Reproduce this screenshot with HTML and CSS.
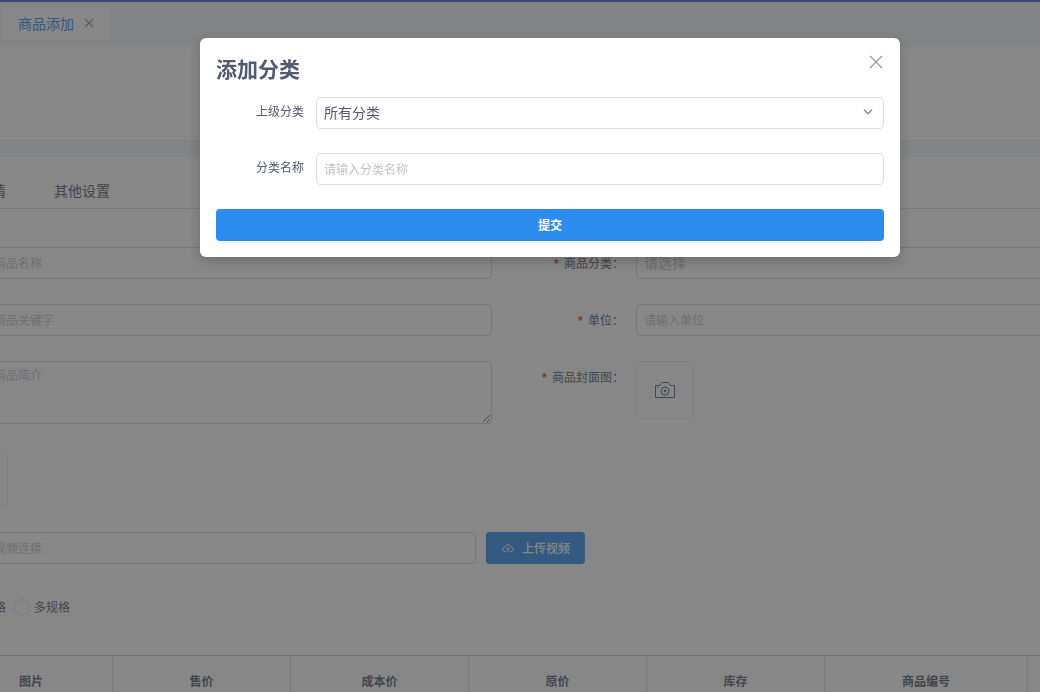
FILE: index.html
```html
<!DOCTYPE html>
<html lang="zh-CN">
<head>
<meta charset="utf-8">
<title>商品添加</title>
<link rel="stylesheet" href="styles.css">
</head>
<body>
<div class="page">
  <div class="tagbar">
    <div class="tag">
      <a class="tag-link" href="#">商品添加</a>
      <button class="tag-close" type="button" aria-label="关闭标签">
        <svg width="10" height="10" viewBox="0 0 10 10"><path d="M1 1l8 8M9 1l-8 8" fill="none" stroke="#999" stroke-width="1.200"/></svg>
      </button>
    </div>
  </div>
  <div class="page-header"></div>
  <main class="card">
    <nav class="tabs">
      <a class="tab" href="#">商品详情</a>
      <a class="tab" href="#">其他设置</a>
    </nav>
    <form class="product-form">
      <div class="row">
        <input class="control" type="text" placeholder="请输入商品名称" aria-label="商品名称">
        <label class="label required" for="category">商品分类：</label>
        <select class="control select-empty" id="category"><option>请选择</option></select>
      </div>
      <div class="row">
        <input class="control" type="text" placeholder="请输入商品关键字" aria-label="商品关键字">
        <label class="label required" for="unit">单位：</label>
        <input class="control" id="unit" type="text" placeholder="请输入单位">
      </div>
      <div class="row">
        <textarea class="control area" placeholder="请输入商品简介" aria-label="商品简介"></textarea>
        <label class="label required" for="cover">商品封面图：</label>
        <button class="upload" id="cover" type="button">
          <svg width="20" height="16" viewBox="0 0 20 16" fill="none" stroke="#515a6e" stroke-width="1">
            <path d="M.5 3.5h4.2l1.6-2.2q.5-.8 1.400-.8h4.600q.9 0 1.400.8l1.600 2.200h4.200v12H.5z"/>
            <circle cx="10" cy="9" r="4"/>
            <circle cx="10" cy="9" r="1" fill="#515a6e"/>
            <path d="M2 5.500h1.500"/>
          </svg>
        </button>
      </div>
      <div class="row media-row">
        <button class="upload" type="button" aria-label="上传轮播图"></button>
      </div>
      <div class="row">
        <div class="video">
          <input class="control" type="text" placeholder="请输入视频连接" aria-label="视频连接">
        </div>
        <div class="video-action">
          <button class="primary upload-video" type="button">
            <svg width="12" height="12" viewBox="0 0 12 12" fill="none" stroke="#fff" stroke-width="1">
              <path d="M4 9.500H2.700A2.200 2.200 0 0 1 2.600 5.200 3.500 3.500 0 0 1 9.300 5.200 2.200 2.200 0 0 1 9.300 9.500H8M6 10.500V5.500M4.300 7.200L6 5.500l1.700 1.700"/>
            </svg>
            <span>上传视频</span>
          </button>
        </div>
      </div>
      <div class="radios">
        <label class="radio"><input type="radio" name="spec"><span>单规格</span></label>
        <label class="radio"><input type="radio" name="spec"><span>多规格</span></label>
      </div>
      <table class="spec-table">
        <colgroup><col class="col-image"><col class="col"><col class="col"><col class="col"><col class="col"><col class="col-code"><col></colgroup>
        <thead><tr><th>图片</th><th>售价</th><th>成本价</th><th>原价</th><th>库存</th><th>商品编号</th><td></td></tr></thead>
      </table>
    </form>
  </main>
</div>

<div class="mask"></div>
<section class="modal" role="dialog" aria-labelledby="modal-title">
  <header class="modal-head">
    <h2 class="modal-title" id="modal-title">添加分类</h2>
    <button class="modal-close" type="button" aria-label="关闭">
      <svg width="14" height="14" viewBox="0 0 14 14"><path d="M1 1l12 12M13 1L1 13" fill="none" stroke="#999" stroke-width="1.200"/></svg>
    </button>
  </header>
  <form class="modal-form">
    <div class="field">
      <label class="label" for="parent">上级分类</label>
      <div class="select-wrap">
        <select class="control" id="parent"><option>所有分类</option></select>
        <svg class="chevron" width="10" height="6" viewBox="0 0 10 6"><path d="M1 .8l4 4 4-4" fill="none" stroke="#808695" stroke-width="1.300"/></svg>
      </div>
    </div>
    <div class="field">
      <label class="label" for="name">分类名称</label>
      <input class="control" id="name" type="text" placeholder="请输入分类名称">
    </div>
    <button class="primary submit" type="submit">提交</button>
  </form>
</section>
</body>
</html>
```
FILE: styles.css
```css
* { box-sizing: border-box; }

body {
  margin: 0;
  height: 100vh;
  overflow: hidden;
  background: #fff;
  color: #515a6e;
  font: 12px/18px "Noto Sans CJK SC", "Liberation Sans", sans-serif;
}

button, input, select, textarea { font: inherit; color: inherit; }
button { padding: 0; border: 0; background: none; cursor: pointer; }
a { color: inherit; text-decoration: none; }
svg { display: block; }

.page {
  height: 100%;
  overflow: hidden;
  border-top: 2px solid #2d6cd0;
  background: #f3f6fb;
}

.tagbar { padding: 6px 2px; }
.tag {
  display: inline-flex;
  align-items: center;
  gap: 10px;
  height: 32px;
  padding: 0 16px 2px;
  background: #fff;
  vertical-align: top;
}
.tag-link { color: #2d8cf0; font-size: 14px; }

.page-header {
  height: 95px;
  border-bottom: 1px solid #e3e5e8;
  background: #fff;
}

.card {
  margin-top: 16px;
  background: #fff;
}

.tabs {
  display: flex;
  gap: 48px;
  height: 52px;
  padding-top: 16px;
  border-bottom: 1px solid #dcdee2;
  font-size: 14px;
  line-height: 34px;
}
.tab { flex: none; }
.tab:first-child { margin-left: -50px; }

/* The form is wider than the visible part of the workspace. */
.product-form {
  display: flex;
  flex-direction: column;
  gap: 25px;
  margin: 0 -138px 0 -50px;
  padding-top: 38px;
}
.row {
  display: grid;
  grid-template-columns: 1fr 144px 1fr;
  height: 32px;
}
.row:has(.area) { height: 63px; }
.media-row { height: 58px; }

.label {
  padding-right: 12px;
  line-height: 32px;
  text-align: right;
}
.required::before {
  content: "*";
  margin-right: 4px;
  color: #ed4014;
  font-family: "Liberation Mono", monospace;
  font-weight: 700;
  line-height: 1;
}

.control {
  display: block;
  width: 100%;
  height: 32px;
  padding: 0 7px 2px;
  border: 1px solid #d3d5da;
  border-radius: 4px;
  background: #fff;
  outline: 0;
  appearance: none;
}
.control::placeholder { color: #c0c3ca; opacity: 1; }
select.control { font-size: 14px; }
.select-empty { color: #c0c3ca; }
.area {
  height: 63px;
  padding-top: 4px;
  resize: vertical;
}

.upload {
  display: grid;
  place-items: center;
  width: 58px;
  height: 58px;
  border: 1px solid #e8eaec;
  border-radius: 4px;
}

.video { padding-right: 16px; }
.video-action { margin-left: -6px; }
.primary {
  border-radius: 4px;
  background: #2d8cf0;
  color: #fff;
  height: 32px;
}
.upload-video {
  display: flex;
  align-items: center;
  gap: 8px;
  padding: 0 15px 0 16px;
  font-weight: 500;
}

.radios {
  display: flex;
  align-items: center;
  gap: 8px;
  height: 36px;
}
.radio {
  display: flex;
  align-items: center;
  gap: 4px;
}
.radio input {
  width: 16px;
  height: 16px;
  margin: 0;
  border: 1px solid #dcdee2;
  border-radius: 50%;
  background: #fff;
  appearance: none;
}

.spec-table {
  width: 100%;
  margin-top: 5px;
  border-spacing: 0;
  border-top: 1px solid #c5c8ce;
  table-layout: fixed;
}
.col-image { width: 163px; }
.col { width: 178px; }
.col-code { width: 203px; }
.spec-table th {
  height: 50px;
  padding: 0;
  border-right: 1px solid #dcdee2;
  font-weight: 700;
}

.mask {
  position: fixed;
  inset: 0;
  background: rgba(55, 55, 55, 0.6);
}

.modal {
  position: absolute;
  top: 38px;
  left: 200px;
  right: 140px;
  padding: 16px;
  border-radius: 6px;
  background: #fff;
  box-shadow: 0 4px 12px rgba(0, 0, 0, 0.2);
}
.modal-head {
  display: flex;
  justify-content: space-between;
  align-items: flex-start;
  margin-bottom: 15px;
}
.modal-title {
  margin: 0;
  font-size: 21px;
  line-height: 28px;
  font-weight: 700;
}
.modal-close { padding: 1px; }
.modal-form {
  display: flex;
  flex-direction: column;
  gap: 24px;
}
.field {
  display: grid;
  grid-template-columns: 100px 1fr;
}
.field .label { line-height: 28px; }
.field .control { border-color: #dcdee2; }
.select-wrap { position: relative; }
.chevron {
  position: absolute;
  top: 12px;
  right: 11px;
  pointer-events: none;
}
.submit { font-weight: 700; }
```
